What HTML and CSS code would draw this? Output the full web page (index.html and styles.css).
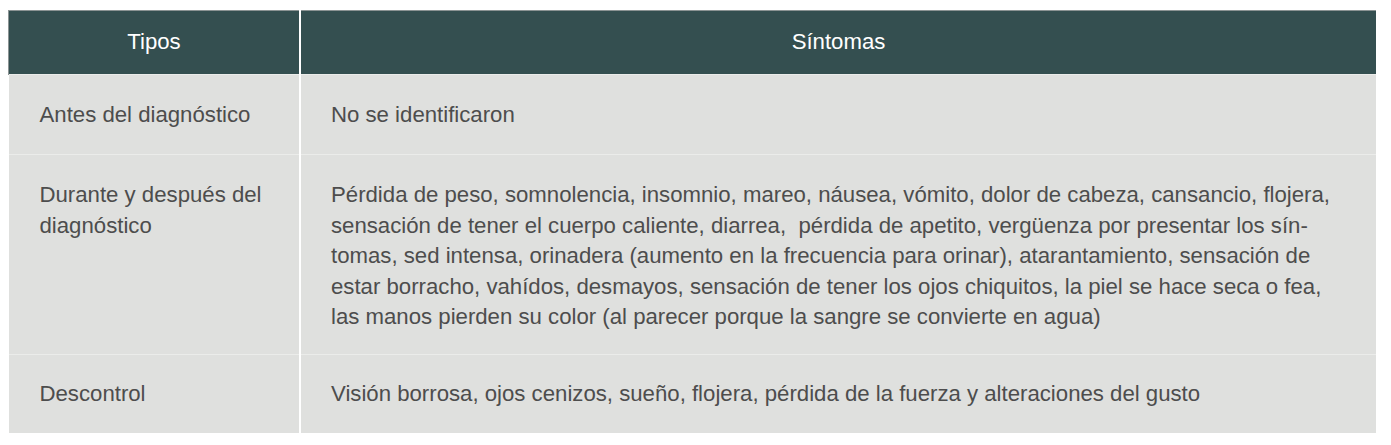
FILE: index.html
```html
<!DOCTYPE html>
<html lang="es">
<head>
<meta charset="utf-8">
<link rel="stylesheet" href="styles.css">
</head>
<body>
<table class="sym-table">
  <thead>
    <tr>
      <th class="col-type">Tipos</th>
      <th class="col-sym">Síntomas</th>
    </tr>
  </thead>
  <tbody>
    <tr class="row-short">
      <td>Antes del diagnóstico</td>
      <td>No se identificaron</td>
    </tr>
    <tr class="row-long">
      <td>Durante y después del<br>diagnóstico</td>
      <td>Pérdida de peso, somnolencia, insomnio, mareo, náusea, vómito, dolor de cabeza, cansancio, flojera,<br>sensación de tener el cuerpo caliente, diarrea,&nbsp; pérdida de apetito, vergüenza por presentar los sín-<br>tomas, sed intensa, orinadera (aumento en la frecuencia para orinar), atarantamiento, sensación de<br>estar borracho, vahídos, desmayos, sensación de tener los ojos chiquitos, la piel se hace seca o fea,<br>las manos pierden su color (al parecer porque la sangre se convierte en agua)</td>
    </tr>
    <tr class="row-last">
      <td>Descontrol</td>
      <td>Visión borrosa, ojos cenizos, sueño, flojera, pérdida de la fuerza y alteraciones del gusto</td>
    </tr>
  </tbody>
</table>
</body>
</html>
```

FILE: styles.css
```css
html, body {
  margin: 0;
  padding: 0;
  background: #ffffff;
}

body {
  padding: 10px 0 0 8px;
  font-family: "Liberation Sans", Arial, sans-serif;
}

.sym-table {
  border-collapse: collapse;
  width: 1368px;
  table-layout: fixed;
}

.sym-table thead th {
  background: #344f50;
  color: #ffffff;
  font-weight: normal;
  font-size: 22.2px;
  line-height: 24px;
  height: 62px;
  padding: 0 0 1px;
  text-align: center;
  vertical-align: middle;
  border-top: 1px solid #8c9494;
}

.sym-table thead th.col-type {
  width: 290px;
  border-left: 1px solid #8c9494;
  border-right: 2px solid #ffffff;
}

.sym-table tbody td {
  background: #dfe0de;
  color: #4d4d4d;
  font-size: 22.2px;
  line-height: 30.4px;
  padding: 25px 10px 24px 31px;
  vertical-align: top;
  border-top: 1px solid #ebecea;
}

.sym-table tbody td:first-child {
  border-right: 2px solid #ffffff;
  padding-left: 31px;
}

.sym-table tbody td:last-child {
  padding-left: 30px;
  white-space: nowrap;
}

.sym-table .row-long td {
  padding-top: 25px;
  padding-bottom: 22px;
}

.sym-table .row-last td {
  padding-top: 24px;
  padding-bottom: 23px;
}
```
